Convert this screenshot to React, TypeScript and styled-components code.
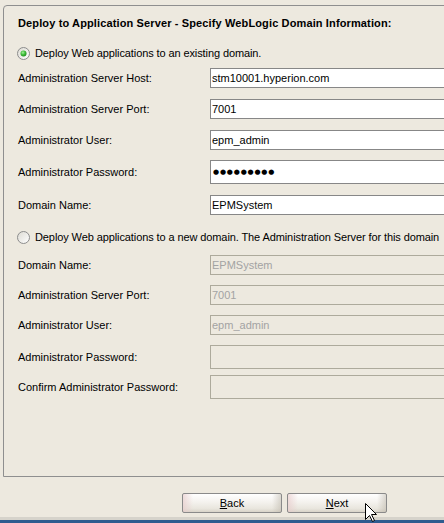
import React from "react";
import styled, { createGlobalStyle } from "styled-components";

const Global = createGlobalStyle`
  html, body {
    margin: 0;
    padding: 0;
    background: #EDE9DF;
    overflow: hidden;
  }
  body {
    font-family: "Liberation Sans", Arial, sans-serif;
    font-size: 11px;
    color: #000;
  }
`;

const Page = styled.div`
  position: relative;
  width: 444px;
  height: 523px;
  overflow: hidden;
  display: flex;
  flex-direction: column;
  background: #EDE9DF;
`;

const Panel = styled.section`
  box-sizing: border-box;
  margin: 5px 0 0 3px;
  width: 520px;
  height: 472px;
  flex: none;
  border: 1px solid #8f8f8f;
  border-top-left-radius: 4px;
  padding: 10px 0 0 14px;
  display: flex;
  flex-direction: column;
`;

const Title = styled.h1`
  margin: 0;
  font-size: 11px;
  line-height: 14px;
  font-weight: bold;
  letter-spacing: 0.13px;
  white-space: nowrap;
`;

const RadioRow = styled.label<{ $mt: number }>`
  margin-top: ${(p) => p.$mt}px;
  height: 13px;
  display: flex;
  align-items: center;
  gap: 4px;
  margin-left: -1px;
  white-space: nowrap;
  line-height: 13px;
`;

const RadioText = styled.span`
  letter-spacing: -0.1px;
  padding-left: 1px;
`;

const Row = styled.div<{ $mt: number; $h: number }>`
  margin-top: ${(p) => p.$mt}px;
  height: ${(p) => p.$h}px;
  display: grid;
  grid-template-columns: 192px 300px;
  align-items: center;
`;

const Label = styled.span`
  white-space: nowrap;
  line-height: 13px;
`;

const Field = styled.input<{ $disabled?: boolean; $h: number; $mask?: boolean }>`
  box-sizing: border-box;
  width: 300px;
  height: ${(p) => p.$h}px;
  margin: 0;
  padding: 0 1px;
  outline: none;
  border: 1px solid ${(p) => (p.$disabled ? "#ADAA9C" : "#878787")};
  background: ${(p) => (p.$disabled ? "#EDE9DF" : "#FFFFFF")};
  color: ${(p) => (p.$disabled ? "#A3A3A3" : "#000000")};
  font-family: ${(p) => (p.$mask ? '"DejaVu Sans", sans-serif' : '"Liberation Sans", Arial, sans-serif')};
  font-size: ${(p) => (p.$mask ? "7px" : "11px")};
  letter-spacing: ${(p) => (p.$mask ? "0.8px" : "normal")};
  padding-left: ${(p) => (p.$mask ? "2px" : "1px")};
`;

const ButtonBar = styled.div`
  margin-top: 16px;
  padding-left: 182px;
  display: flex;
  gap: 5px;
  flex: none;
`;

const Button = styled.button`
  box-sizing: border-box;
  width: 100px;
  height: 20px;
  margin: 0;
  padding: 0;
  border: 1px solid #8a8a8a;
  border-radius: 2px;
  font-family: "Liberation Sans", Arial, sans-serif;
  font-size: 11px;
  color: #000;
  background:
    linear-gradient(to right, rgba(232, 205, 205, 0.7) 0px, rgba(255, 255, 255, 0) 10px),
    linear-gradient(to left, rgba(190, 184, 172, 0.55) 0px, rgba(255, 255, 255, 0) 9px),
    linear-gradient(to bottom, #ffffff 0%, #f4f2ee 45%, #e9e6de 80%, #d9d4c9 100%);
  line-height: 18px;
  text-align: center;
  u {
    text-decoration: underline;
  }
`;

const BottomStrip = styled.div`
  margin-top: 4px;
  flex: none;
  height: 3px;
  background: #D6D3CB;
  border-bottom: 3px solid #2E5C8F;
`;

const Cursor = styled.svg`
  position: absolute;
  left: 365px;
  top: 503px;
  width: 13px;
  height: 20px;
`;

const Radio = ({ checked }: { checked?: boolean }) => (
  <svg width="13" height="13" viewBox="0 0 13 13">
    <defs>
      <linearGradient id={checked ? "rg1" : "rg2"} x1="0" y1="0" x2="1" y2="1">
        <stop offset="0" stopColor="#DCDAD2" />
        <stop offset="1" stopColor="#FFFFFF" />
      </linearGradient>
      <radialGradient id="dot" cx="0.4" cy="0.35" r="0.7">
        <stop offset="0" stopColor="#A8F0A0" />
        <stop offset="0.5" stopColor="#3FBF3A" />
        <stop offset="1" stopColor="#1E8A1E" />
      </radialGradient>
    </defs>
    <circle cx="6.5" cy="6.5" r="6" fill={`url(#${checked ? "rg1" : "rg2"})`} stroke="#8C8C8C" strokeWidth="1" />
    {checked && <circle cx="6.5" cy="6.5" r="3" fill="url(#dot)" />}
  </svg>
);

type F = { label: string; value: string; h: number; mt: number; mask?: boolean; disabled?: boolean };

const existing: F[] = [
  { label: "Administration Server Host:", value: "stm10001.hyperion.com", h: 20, mt: 8 },
  { label: "Administration Server Port:", value: "7001", h: 20, mt: 11 },
  { label: "Administrator User:", value: "epm_admin", h: 20, mt: 11 },
  { label: "Administrator Password:", value: "●●●●●●●●●", h: 24, mt: 10, mask: true },
  { label: "Domain Name:", value: "EPMSystem", h: 20, mt: 11 },
];

const fresh: F[] = [
  { label: "Domain Name:", value: "EPMSystem", h: 20, mt: 11, disabled: true },
  { label: "Administration Server Port:", value: "7001", h: 20, mt: 10, disabled: true },
  { label: "Administrator User:", value: "epm_admin", h: 20, mt: 10, disabled: true },
  { label: "Administrator Password:", value: "", h: 24, mt: 10, disabled: true },
  { label: "Confirm Administrator Password:", value: "", h: 24, mt: 6, disabled: true },
];

const FieldRow = ({ f }: { f: F }) => (
  <Row $mt={f.mt} $h={f.h}>
    <Label>{f.label}</Label>
    <Field
      readOnly
      value={f.value}
      $h={f.h}
      $mask={f.mask}
      $disabled={f.disabled}
      disabled={f.disabled}
    />
  </Row>
);

export default function App() {
  return (
    <>
      <Global />
      <Page>
        <Panel>
          <Title>Deploy to Application Server - Specify WebLogic Domain Information:</Title>
          <RadioRow $mt={17}>
            <Radio checked />
            <RadioText>Deploy Web applications to an existing domain.</RadioText>
          </RadioRow>
          {existing.map((f, i) => (
            <FieldRow key={"e" + i} f={f} />
          ))}
          <RadioRow $mt={16}>
            <Radio />
            <RadioText>
              Deploy Web applications to a new domain. The Administration Server for this domain
            </RadioText>
          </RadioRow>
          {fresh.map((f, i) => (
            <FieldRow key={"n" + i} f={f} />
          ))}
        </Panel>
        <ButtonBar>
          <Button>
            <u>B</u>ack
          </Button>
          <Button>
            <u>N</u>ext
          </Button>
        </ButtonBar>
        <BottomStrip />
        <Cursor viewBox="0 0 13 20">
          <path
            d="M0.5 0.5 L0.5 16.5 L4.5 12.5 L7.5 18.5 L9.5 17.5 L6.5 11.5 L11.5 11.5 Z"
            fill="#ffffff"
            stroke="#000000"
            strokeWidth="1"
            strokeLinejoin="miter"
          />
        </Cursor>
      </Page>
    </>
  );
}
